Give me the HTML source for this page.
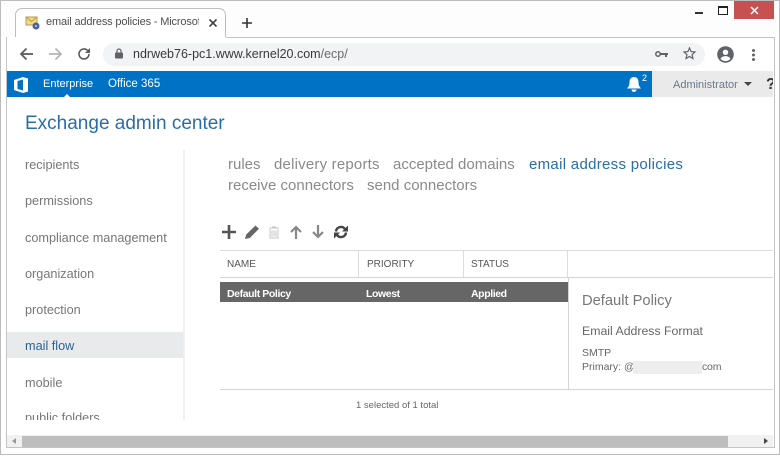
<!DOCTYPE html>
<html><head><meta charset="utf-8"><style>
html,body{margin:0;padding:0;background:#fff}
#p{position:relative;width:780px;height:456px;overflow:hidden;background:#fff;font-family:"Liberation Sans",sans-serif}
.a{position:absolute}
.t{position:absolute;white-space:nowrap;line-height:1;color:#777}
svg{position:absolute;overflow:visible}
</style></head><body><div id="p">
<!-- window frame -->
<div class="a" style="left:0;top:0;width:778px;height:453px;border:1px solid #bcbcbc"></div>
<div class="a" style="left:1px;top:1px;width:776px;height:36px;background:#fdfdfd"></div>
<div class="a" style="left:6px;top:37px;width:767px;height:409px;border:1px solid #c4c4c4;background:#fff"></div>
<!-- tab -->
<div class="a" style="left:15px;top:8px;width:211px;height:30px;background:#fff;border:1px solid #bdbdbd;border-bottom:0;border-radius:7px 7px 0 0;box-sizing:border-box"></div>
<div class="a" style="left:7px;top:37px;width:219px;height:2px;background:#fff"></div>
<svg style="left:25px;top:16px" width="16" height="14" viewBox="0 0 16 14"><rect x="1" y="1" width="11" height="8" fill="#f2d98a" stroke="#b89c45"/><path d="M1 1l5.500 4.500L12 1" fill="none" stroke="#b89c45"/><circle cx="11" cy="10" r="3.500" fill="#4a5f9e"/><circle cx="11" cy="10" r="1" fill="#c9d2ea"/></svg>
<div class="t" style="left:46px;top:17px;font-size:11px;letter-spacing:-.15px;color:#4d4d4d;width:153px;overflow:hidden;height:14px">email address policies - Microsof</div>
<svg style="left:208px;top:18px" width="11" height="11" viewBox="0 0 11 11"><path d="M1.500 1.500l7 7M8.500 1.500l-7 7" stroke="#444" stroke-width="1.600" fill="none"/></svg>
<svg style="left:241px;top:17px" width="12" height="12" viewBox="0 0 12 12"><path d="M6 1v10M1 6h10" stroke="#333" stroke-width="1.600" fill="none"/></svg>
<!-- window controls -->
<div class="a" style="left:695px;top:12px;width:8px;height:2px;background:#333"></div>
<div class="a" style="left:718px;top:6px;width:8px;height:6px;border:1px solid #222;border-top-width:2px"></div>
<div class="a" style="left:734px;top:1px;width:40px;height:18px;background:#c75050"></div>
<svg style="left:750px;top:6px" width="9" height="9" viewBox="0 0 9 9"><path d="M1 1l7 7M8 1l-7 7" stroke="#fff" stroke-width="1.500" fill="none"/></svg>
<!-- toolbar -->
<svg style="left:19px;top:47px" width="15" height="14" viewBox="0 0 15 14"><path d="M14 7H2M7.500 1.500L2 7l5.500 5.500" stroke="#5a5a5a" stroke-width="1.700" fill="none"/></svg>
<svg style="left:48px;top:47px" width="15" height="14" viewBox="0 0 15 14"><path d="M1 7h12M7.500 1.500L13 7l-5.500 5.500" stroke="#b4b4b4" stroke-width="1.700" fill="none"/></svg>
<svg style="left:77px;top:47px" width="14" height="14" viewBox="0 0 14 14"><path d="M12 7a5 5 0 1 1-1.500-3.600" stroke="#5a5a5a" stroke-width="1.600" fill="none"/><path d="M13 1v5H8z" fill="#5a5a5a"/></svg>
<div class="a" style="left:103px;top:43px;width:602px;height:23px;background:#f1f3f4;border-radius:12px"></div>
<svg style="left:114px;top:48px" width="10" height="11" viewBox="0 0 10 11"><rect x="1" y="4.500" width="8" height="6" rx="1" fill="#5f6368"/><path d="M3 5V3a2 2 0 0 1 4 0v2" stroke="#5f6368" stroke-width="1.200" fill="none"/></svg>
<div class="t" style="left:133px;top:48px;font-size:12.500px;color:#3a3a3a">ndrweb76-pc1.www.kernel20.com<span style="color:#6a6a6a">/ecp/</span></div>
<svg style="left:655px;top:50px" width="13" height="8" viewBox="0 0 13 8"><circle cx="3" cy="4" r="2.200" fill="none" stroke="#5f6368" stroke-width="1.500"/><path d="M5 3h8v2h-1v2h-2V5H5z" fill="#5f6368"/></svg>
<svg style="left:683px;top:47px" width="13" height="13" viewBox="0 0 13 13"><path d="M6.500 1l1.600 3.600 3.900.4-2.900 2.600.8 3.900-3.400-2-3.400 2 .8-3.900L1 5l3.900-.4z" fill="none" stroke="#5f6368" stroke-width="1.200"/></svg>
<svg style="left:717px;top:46px" width="17" height="17" viewBox="0 0 17 17"><circle cx="8.500" cy="8.500" r="8.300" fill="#5f6368"/><circle cx="8.500" cy="6.300" r="2.700" fill="#fff"/><path d="M3.500 12.800c1-2 3-2.700 5-2.700s4 .7 5 2.700a6.500 6.500 0 0 1-10 0z" fill="#fff"/></svg>
<div class="a" style="left:752px;top:49px;width:3px;height:3px;border-radius:2px;background:#5f6368;box-shadow:0 4.500px 0 #5f6368,0 9px 0 #5f6368"></div>
<!-- blue bar -->
<div class="a" style="left:7px;top:71px;width:645px;height:26px;background:#0072c6"></div>
<div class="a" style="left:652px;top:71px;width:121px;height:26px;background:#eaeaea"></div>
<svg style="left:14px;top:77px" width="15" height="16" viewBox="0 0 15 16"><path d="M0 3L9 0l5 1.500v13L9 16 0 13zM9 2.500L3.500 4v8L9 13.500z" fill="#fff" fill-rule="evenodd"/></svg>
<div class="t" style="left:43px;top:79px;font-size:11px;color:#fff">Enterprise</div>
<div class="t" style="left:108px;top:79px;font-size:11.500px;color:#fff">Office 365</div>
<div class="a" style="left:64px;top:94px;width:0;height:0;border:3px solid transparent;border-top:0;border-bottom-color:#fff"></div>
<svg style="left:627px;top:76px" width="14" height="17" viewBox="0 0 14 17"><path d="M7 1c3 0 4.500 2.200 4.500 5 0 3.500 1 4.500 2.500 6.500H0C1.500 10.500 2.500 9.500 2.500 6 2.500 3.200 4 1 7 1z" fill="#fff"/><path d="M4.500 13.500h5a2.500 2.500 0 0 1-5 0z" fill="#fff"/></svg>
<div class="t" style="left:642px;top:74px;font-size:9px;color:#fff">2</div>
<div class="t" style="left:673px;top:80px;font-size:11px;color:#6a7a8a">Administrator</div>
<div class="a" style="left:744px;top:82px;width:0;height:0;border:4px solid transparent;border-bottom:0;border-top:4px solid #444"></div>
<div class="t" style="left:766px;top:77px;font-size:16px;font-weight:bold;color:#333;width:7px;overflow:hidden">?</div>
<!-- heading -->
<div class="t" style="left:25px;top:114px;font-size:19px;letter-spacing:0;color:#2a6ea8">Exchange admin center</div>
<!-- left nav -->
<div class="a" style="left:183px;top:150px;width:2px;height:270px;background:#efefef"></div>
<div class="a" style="left:7px;top:332px;width:176px;height:26px;background:#e9eaec"></div>
<div class="t" style="left:25px;top:159px;font-size:12.700px;color:#777">recipients</div>
<div class="t" style="left:25px;top:195px;font-size:12.700px;color:#777">permissions</div>
<div class="t" style="left:25px;top:232px;font-size:12.700px;color:#777">compliance management</div>
<div class="t" style="left:25px;top:268px;font-size:12.700px;color:#777">organization</div>
<div class="t" style="left:25px;top:304px;font-size:12.700px;color:#777">protection</div>
<div class="t" style="left:25px;top:340px;font-size:12.700px;color:#2a6496">mail flow</div>
<div class="t" style="left:25px;top:377px;font-size:12.700px;color:#777">mobile</div>
<div class="a" style="left:20px;top:411px;width:110px;height:9px;overflow:hidden"><div class="t" style="left:5px;top:1px;font-size:12.700px;color:#777">public folders</div></div>
<!-- sub nav -->
<div class="t" style="left:228px;top:157px;font-size:15px;color:#8a8a8a">rules</div>
<div class="t" style="left:274px;top:157px;font-size:15px;letter-spacing:.2px;color:#8a8a8a">delivery reports</div>
<div class="t" style="left:393px;top:157px;font-size:15px;color:#8a8a8a">accepted domains</div>
<div class="t" style="left:529px;top:157px;font-size:15px;letter-spacing:.3px;color:#2a6ea8">email address policies</div>
<div class="t" style="left:228px;top:178px;font-size:15px;color:#8a8a8a">receive connectors</div>
<div class="t" style="left:367px;top:178px;font-size:15px;color:#8a8a8a">send connectors</div>
<!-- action icons -->
<svg style="left:222px;top:225px" width="14" height="14" viewBox="0 0 14 14"><path d="M7 0v14M0 7h14" stroke="#555" stroke-width="2.600" fill="none"/></svg>
<svg style="left:245px;top:225px" width="14" height="14" viewBox="0 0 14 14"><path d="M0 14l1.200-4.500L10.500 0.500 14 3.800 4.800 13z" fill="#666"/></svg>
<svg style="left:268px;top:226px" width="12" height="13" viewBox="0 0 12 13"><path d="M1 2h10M4 1h4M2 3v9h8V3M4 4.500v6M6 4.500v6M8 4.500v6" stroke="#c4c4c4" fill="none"/></svg>
<svg style="left:290px;top:225px" width="12" height="14" viewBox="0 0 12 14"><path d="M6 14V2M1 7l5-5 5 5" stroke="#888" stroke-width="2.200" fill="none"/></svg>
<svg style="left:312px;top:225px" width="12" height="14" viewBox="0 0 12 14"><path d="M6 0v12M1 7l5 5 5-5" stroke="#888" stroke-width="2.200" fill="none"/></svg>
<svg style="left:334px;top:225px" width="14" height="14" viewBox="0 0 14 14"><path d="M2 6.500a5 5 0 0 1 9-2.500M12 7.500a5 5 0 0 1-9 2.500" stroke="#444" stroke-width="2.400" fill="none"/><path d="M14 0.500v6H8zM0 13.500v-6h6z" fill="#444"/></svg>
<!-- table header -->
<div class="a" style="left:220px;top:250px;width:553px;height:1px;background:#dcdcdc"></div>
<div class="a" style="left:220px;top:277px;width:553px;height:1px;background:#d4d4d4"></div>
<div class="a" style="left:358px;top:251px;width:1px;height:26px;background:#dcdcdc"></div>
<div class="a" style="left:463px;top:251px;width:1px;height:26px;background:#dcdcdc"></div>
<div class="a" style="left:567px;top:251px;width:1px;height:26px;background:#dcdcdc"></div>
<div class="t" style="left:227px;top:260px;font-size:10px;color:#555">NAME</div>
<div class="t" style="left:367px;top:260px;font-size:10px;color:#555">PRIORITY</div>
<div class="t" style="left:471px;top:260px;font-size:10px;color:#555">STATUS</div>
<!-- selected row -->
<div class="a" style="left:220px;top:282px;width:348px;height:20px;background:#666"></div>
<div class="t" style="left:227px;top:289px;font-size:10.500px;letter-spacing:-.4px;font-weight:bold;color:#fff">Default Policy</div>
<div class="t" style="left:366px;top:289px;font-size:10.500px;letter-spacing:-.4px;font-weight:bold;color:#fff">Lowest</div>
<div class="t" style="left:471px;top:289px;font-size:10.500px;letter-spacing:-.4px;font-weight:bold;color:#fff">Applied</div>
<!-- details -->
<div class="a" style="left:568px;top:278px;width:1px;height:111px;background:#d4d4d4"></div>
<div class="a" style="left:220px;top:389px;width:553px;height:1px;background:#d4d4d4"></div>
<div class="t" style="left:582px;top:294px;font-size:14.700px;color:#777">Default Policy</div>
<div class="t" style="left:582px;top:325px;font-size:12.300px;color:#666">Email Address Format</div>
<div class="t" style="left:582px;top:348px;font-size:10.500px;color:#666">SMTP</div>
<div class="t" style="left:582px;top:362px;font-size:10.500px;color:#666">Primary: @</div>
<div class="a" style="left:633px;top:361px;width:69px;height:13px;background:#eeeeee"></div>
<div class="t" style="left:702px;top:362px;font-size:10.500px;letter-spacing:-.2px;color:#666">com</div>
<div class="t" style="left:356px;top:401px;font-size:9.500px;color:#666">1 selected of 1 total</div>
<!-- scrollbar -->
<div class="a" style="left:7px;top:435px;width:766px;height:12px;background:#f1f1f1"></div>
<div class="a" style="left:22px;top:436px;width:706px;height:11px;background:#bdbdbd"></div>
<div class="a" style="left:12px;top:438px;width:0;height:0;border:3.500px solid transparent;border-left:0;border-right:4px solid #999"></div>
<div class="a" style="left:764px;top:438px;width:0;height:0;border:3.500px solid transparent;border-right:0;border-left:4px solid #444"></div>
</div></body></html>
